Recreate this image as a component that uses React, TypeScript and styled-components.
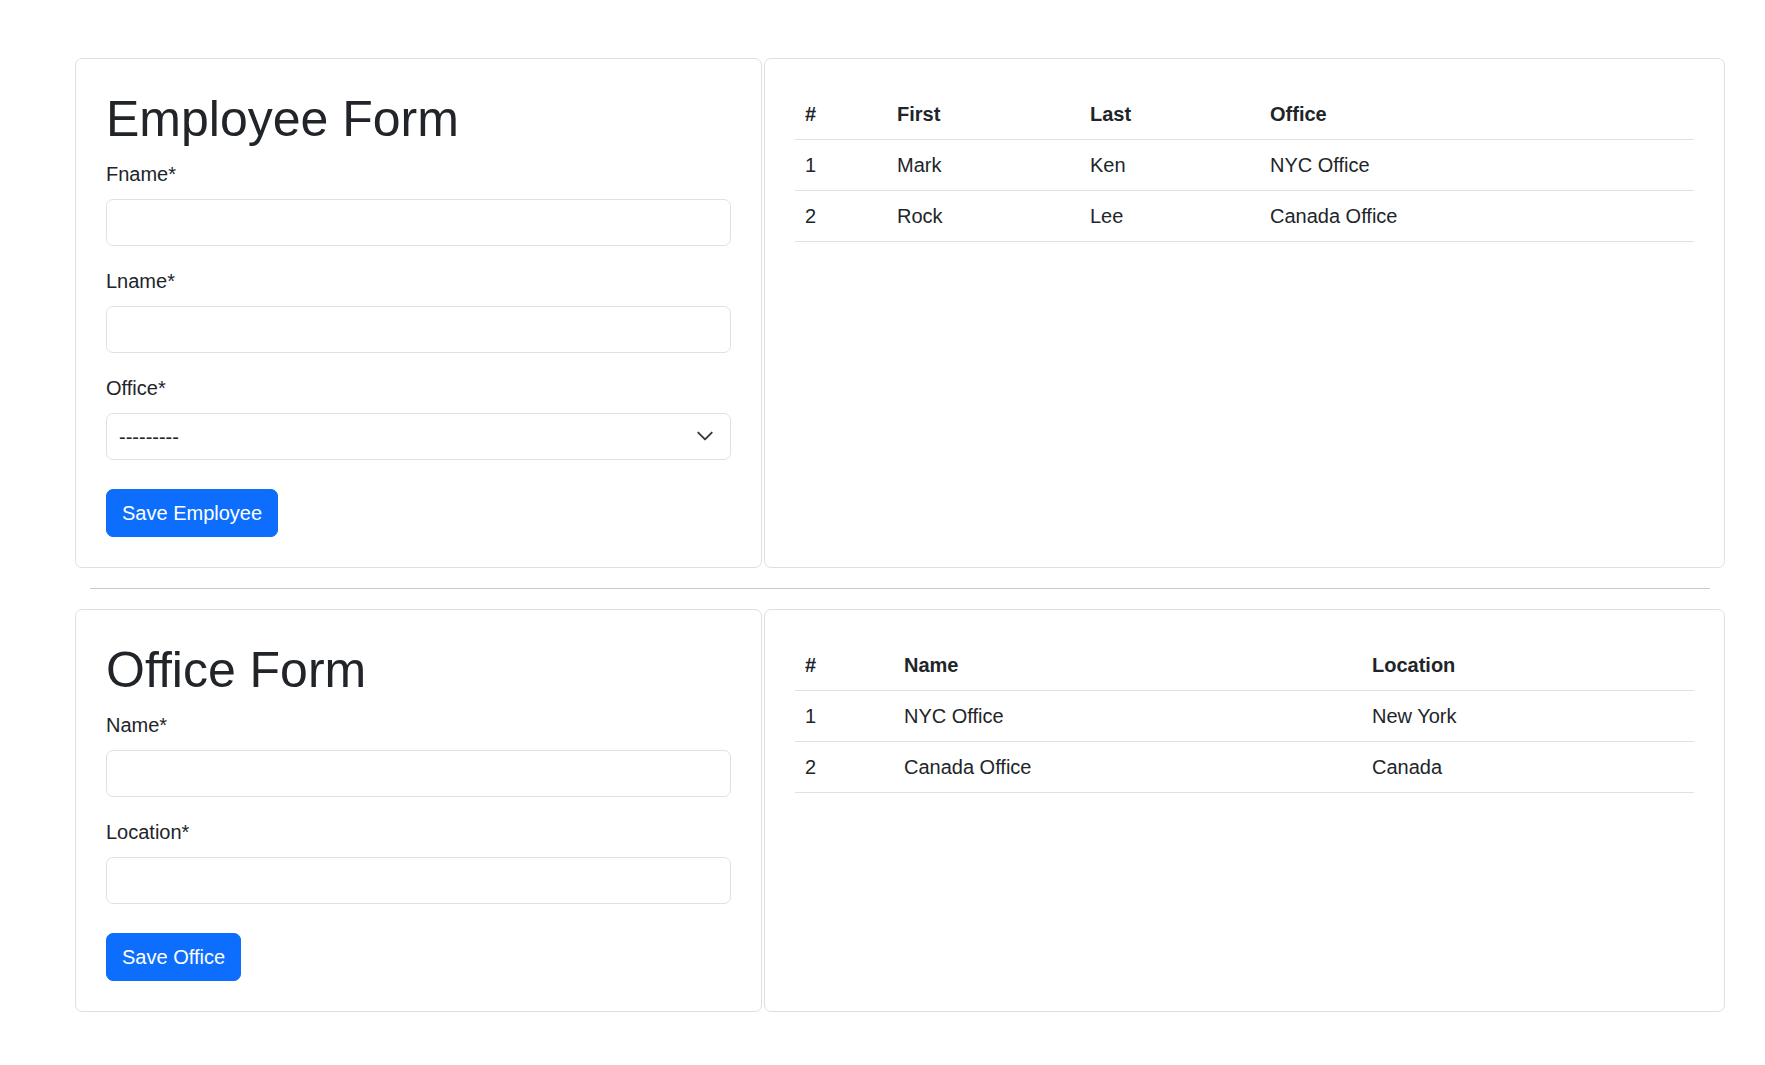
import React from "react";
import styled, { createGlobalStyle } from "styled-components";

const Global = createGlobalStyle`
  * { box-sizing: border-box; }
  html, body { margin: 0; padding: 0; background: #fff; }
  body {
    font-family: "Liberation Sans", Arial, sans-serif;
    font-size: 20px;
    line-height: 1.5;
    color: #212529;
  }
`;

const Page = styled.div`
  padding: 58px 40px 40px 75px;
`;

const Section = styled.section`
  display: grid;
  grid-template-columns: 687px 961px;
  gap: 2px;
`;

const Divider = styled.hr`
  margin: 20px 15px 20px;
  border: 0;
  border-top: 1px solid #c9cacb;
`;

const Card = styled.div`
  border: 1px solid #dfdfdf;
  border-radius: 7px;
  padding: 30px;
  background: #fff;
`;

const Title = styled.h1`
  margin: 0 0 10px;
  font-size: 50px;
  font-weight: 400;
  line-height: 1.2;
`;

const Field = styled.div<{ $mb?: number }>`
  margin-bottom: ${(p) => p.$mb ?? 20}px;
`;

const Label = styled.label`
  display: block;
  margin-bottom: 10px;
  font-size: 20px;
  line-height: 30px;
`;

const Input = styled.input`
  display: block;
  width: 100%;
  height: 47px;
  padding: 7px 15px;
  font: inherit;
  border: 1px solid #dee2e6;
  border-radius: 7px;
  background: #fff;
  outline: none;
`;

const SelectWrap = styled.div`
  position: relative;
`;

const Select = styled.select`
  display: block;
  width: 100%;
  height: 47px;
  padding: 7px 45px 7px 12px;
  font: inherit;
  color: #212529;
  border: 1px solid #dee2e6;
  border-radius: 7px;
  background: #fff;
  appearance: none;
  -webkit-appearance: none;
  outline: none;
`;

const Chevron = styled.svg`
  position: absolute;
  right: 17px;
  top: 50%;
  width: 18px;
  height: 18px;
  margin-top: -10px;
  pointer-events: none;
`;

const Button = styled.button`
  display: inline-block;
  padding: 8px 15px;
  font: inherit;
  font-size: 20px;
  line-height: 30px;
  color: #fff;
  background: #0d6efd;
  border: 1px solid #0d6efd;
  border-radius: 7px;
  cursor: pointer;
`;

const Table = styled.table`
  width: 100%;
  border-collapse: collapse;
  table-layout: fixed;
`;

const Th = styled.th<{ $w?: string }>`
  width: ${(p) => p.$w ?? "auto"};
  text-align: left;
  font-weight: 700;
  padding: 10px;
  line-height: 30px;
  border-bottom: 1px solid #dee2e6;
`;

const Td = styled.td`
  padding: 10px;
  line-height: 30px;
  border-bottom: 1px solid #dee2e6;
`;

const employees = [
  { id: 1, first: "Mark", last: "Ken", office: "NYC Office" },
  { id: 2, first: "Rock", last: "Lee", office: "Canada Office" },
];

const offices = [
  { id: 1, name: "NYC Office", location: "New York" },
  { id: 2, name: "Canada Office", location: "Canada" },
];

export default function App() {
  return (
    <>
      <Global />
      <Page>
        <Section>
          <Card>
            <Title>Employee Form</Title>
            <Field>
              <Label>Fname*</Label>
              <Input type="text" />
            </Field>
            <Field>
              <Label>Lname*</Label>
              <Input type="text" />
            </Field>
            <Field $mb={29}>
              <Label>Office*</Label>
              <SelectWrap>
                <Select defaultValue="">
                  <option value="">---------</option>
                  <option value="1">NYC Office</option>
                  <option value="2">Canada Office</option>
                </Select>
                <Chevron viewBox="0 0 16 16">
                  <path d="M2 5l6 6 6-6" fill="none" stroke="#343a40" strokeWidth="1.7" strokeLinecap="round" strokeLinejoin="round" />
                </Chevron>
              </SelectWrap>
            </Field>
            <Button>Save Employee</Button>
          </Card>
          <Card>
            <Table>
              <thead>
                <tr>
                  <Th $w="92px">#</Th>
                  <Th $w="193px">First</Th>
                  <Th $w="180px">Last</Th>
                  <Th>Office</Th>
                </tr>
              </thead>
              <tbody>
                {employees.map((e) => (
                  <tr key={e.id}>
                    <Td>{e.id}</Td>
                    <Td>{e.first}</Td>
                    <Td>{e.last}</Td>
                    <Td>{e.office}</Td>
                  </tr>
                ))}
              </tbody>
            </Table>
          </Card>
        </Section>
        <Divider />
        <Section>
          <Card>
            <Title>Office Form</Title>
            <Field>
              <Label>Name*</Label>
              <Input type="text" />
            </Field>
            <Field $mb={29}>
              <Label>Location*</Label>
              <Input type="text" />
            </Field>
            <Button>Save Office</Button>
          </Card>
          <Card>
            <Table>
              <thead>
                <tr>
                  <Th $w="99px">#</Th>
                  <Th $w="468px">Name</Th>
                  <Th>Location</Th>
                </tr>
              </thead>
              <tbody>
                {offices.map((o) => (
                  <tr key={o.id}>
                    <Td>{o.id}</Td>
                    <Td>{o.name}</Td>
                    <Td>{o.location}</Td>
                  </tr>
                ))}
              </tbody>
            </Table>
          </Card>
        </Section>
      </Page>
    </>
  );
}
